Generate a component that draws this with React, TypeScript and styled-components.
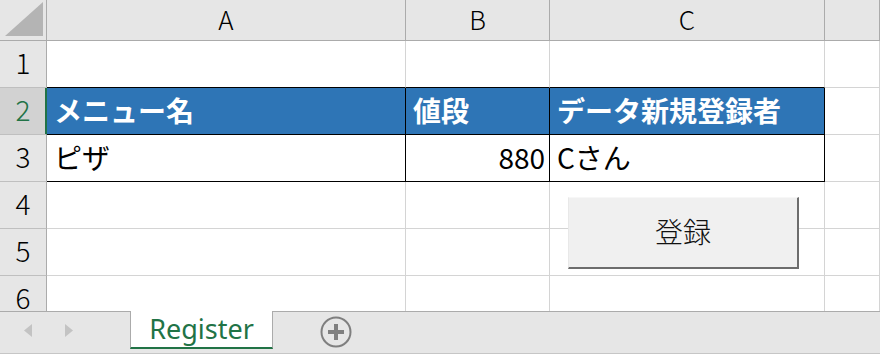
import React from "react";
import styled, { createGlobalStyle } from "styled-components";

const GlobalStyle = createGlobalStyle`
  html, body { margin: 0; padding: 0; background: #ffffff; overflow: hidden; }
  * { box-sizing: border-box; }
`;

const FONT = `"Noto Sans CJK JP", "Noto Sans", sans-serif`;
const GRID = "#d4d4d4";
const HEAD_LINE = "#ababab";
const GREEN = "#217346";

const Workbook = styled.div`
  width: 880px;
  height: 354px;
  display: flex;
  flex-direction: column;
  font-family: ${FONT};
  overflow: hidden;
`;

const Sheet = styled.div`
  position: relative;
  display: grid;
  grid-template-columns: 47px 359px 144px 275px 1fr;
  grid-template-rows: 41px 47px 47px 47px 47px 47px 47px;
  height: 311px;
  flex: none;
  overflow: hidden;
`;

const Corner = styled.div`
  background: #e6e6e6;
  border-right: 1px solid ${HEAD_LINE};
  border-bottom: 1px solid ${HEAD_LINE};
  display: flex;
  align-items: flex-end;
  justify-content: flex-end;
  padding: 0 3px 4px 0;
`;

const ColHeader = styled.div`
  background: #e6e6e6;
  border-right: 1px solid ${HEAD_LINE};
  border-bottom: 1px solid ${HEAD_LINE};
  display: flex;
  align-items: center;
  justify-content: center;
  font-size: 26px;
  font-weight: 300;
  line-height: 38px;
  color: #000;
  padding-bottom: 2px;
`;

const RowHeader = styled.div<{ $selected?: boolean }>`
  background: ${(p) => (p.$selected ? "#d2d2d2" : "#e6e6e6")};
  color: ${(p) => (p.$selected ? GREEN : "#000")};
  border-right: 1px solid ${(p) => (p.$selected ? GREEN : HEAD_LINE)};
  box-shadow: ${(p) => (p.$selected ? `inset -1px 0 0 ${GREEN}` : "none")};
  border-bottom: 1px solid #bfbfbf;
  display: flex;
  align-items: center;
  justify-content: center;
  font-size: 28px;
  font-weight: 300;
  line-height: 42px;
  padding-bottom: 4px;
`;

const Cell = styled.div<{
  $fill?: string;
  $bold?: boolean;
  $align?: "left" | "right";
  $rb?: string;
  $bb?: string;
}>`
  background: ${(p) => p.$fill || "#ffffff"};
  color: ${(p) => (p.$fill ? "#ffffff" : "#000000")};
  font-weight: ${(p) => (p.$bold ? 700 : 400)};
  border-right: 1px solid ${(p) => p.$rb || GRID};
  border-bottom: 1px solid ${(p) => p.$bb || GRID};
  display: flex;
  align-items: center;
  justify-content: ${(p) => (p.$align === "right" ? "flex-end" : "flex-start")};
  padding: 0 4px 2px 7px;
  font-size: 28px;
  line-height: 44px;
  white-space: nowrap;
  overflow: hidden;
`;

const RegisterButton = styled.button`
  position: absolute;
  left: 568px;
  top: 197px;
  width: 231px;
  height: 72px;
  background: #f0f0f0;
  border: none;
  border-top: 1px solid #f7f7f7;
  border-left: 1px solid #e8e8e8;
  border-right: 2px solid #6d6d6d;
  border-bottom: 2px solid #6d6d6d;
  font-family: ${FONT};
  font-size: 28px;
  font-weight: 300;
  color: #111111;
  padding: 0 0 2px 0;
  display: flex;
  align-items: center;
  justify-content: center;
  line-height: 1.3;
`;

const TabBar = styled.div`
  flex: 1;
  display: flex;
  align-items: stretch;
  background: #e6e6e6;
  border-top: 1px solid ${HEAD_LINE};
  border-bottom: 1px solid #c6c6c6;
  padding-bottom: 4px;
`;

const NavArea = styled.div`
  width: 130px;
  display: flex;
  align-items: center;
  padding-left: 24px;
  gap: 33px;
`;

const SheetTab = styled.div`
  width: 143px;
  background: #ffffff;
  border-left: 1px solid ${HEAD_LINE};
  border-right: 1px solid ${HEAD_LINE};
  border-bottom: 2px solid ${GREEN};
  margin-top: -1px;
  color: ${GREEN};
  font-family: "Noto Sans", sans-serif;
  font-size: 27px;
  line-height: 34px;
  display: flex;
  align-items: center;
  justify-content: center;
  padding-bottom: 1px;
`;

const AddSheet = styled.div`
  margin-left: 47px;
  display: flex;
  align-items: center;
  padding-top: 2px;
`;

const columns = ["A", "B", "C"];

type CellSpec = {
  text?: string;
  fill?: string;
  bold?: boolean;
  align?: "left" | "right";
  rb?: string;
  bb?: string;
};

const BLUE = "#2e75b6";
const BLACK = "#000000";

const rows: { n: number; selected?: boolean; cells: CellSpec[] }[] = [
  {
    n: 1,
    cells: [{ bb: BLACK }, { bb: BLACK }, { bb: BLACK }, {}],
  },
  {
    n: 2,
    selected: true,
    cells: [
      { text: "メニュー名", fill: BLUE, bold: true, rb: BLACK, bb: BLACK },
      { text: "値段", fill: BLUE, bold: true, rb: BLACK, bb: BLACK },
      { text: "データ新規登録者", fill: BLUE, bold: true, rb: BLACK, bb: BLACK },
      {},
    ],
  },
  {
    n: 3,
    cells: [
      { text: "ピザ", rb: BLACK, bb: BLACK },
      { text: "880", align: "right", rb: BLACK, bb: BLACK },
      { text: "Cさん", rb: BLACK, bb: BLACK },
      {},
    ],
  },
  { n: 4, cells: [{}, {}, {}, {}] },
  { n: 5, cells: [{}, {}, {}, {}] },
  { n: 6, cells: [{}, {}, {}, {}] },
];

export default function App() {
  return (
    <>
      <GlobalStyle />
      <Workbook>
        <Sheet>
          <Corner>
            <svg width="38" height="34" viewBox="0 0 38 34">
              <polygon points="38,0 38,34 0,34" fill="#b4b4b4" />
            </svg>
          </Corner>
          {columns.map((c) => (
            <ColHeader key={c}>{c}</ColHeader>
          ))}
          <ColHeader />
          {rows.map((r) => (
            <React.Fragment key={r.n}>
              <RowHeader $selected={r.selected}>{r.n}</RowHeader>
              {r.cells.map((c, i) => (
                <Cell
                  key={i}
                  $fill={c.fill}
                  $bold={c.bold}
                  $align={c.align}
                  $rb={c.rb}
                  $bb={c.bb}
                >
                  {c.text}
                </Cell>
              ))}
            </React.Fragment>
          ))}
          <RegisterButton type="button">登録</RegisterButton>
        </Sheet>
        <TabBar>
          <NavArea>
            <svg width="8" height="13" viewBox="0 0 8 13">
              <polygon points="8,0 8,13 0,6.5" fill="#c3c3c3" />
            </svg>
            <svg width="8" height="13" viewBox="0 0 8 13">
              <polygon points="0,0 0,13 8,6.5" fill="#c3c3c3" />
            </svg>
          </NavArea>
          <SheetTab>Register</SheetTab>
          <AddSheet>
            <svg width="32" height="32" viewBox="0 0 32 32">
              <circle cx="16" cy="16" r="14.5" fill="none" stroke="#7f7f7f" strokeWidth="2" />
              <rect x="8" y="14" width="16" height="4" fill="#7f7f7f" />
              <rect x="14" y="8" width="4" height="16" fill="#7f7f7f" />
            </svg>
          </AddSheet>
        </TabBar>
      </Workbook>
    </>
  );
}
